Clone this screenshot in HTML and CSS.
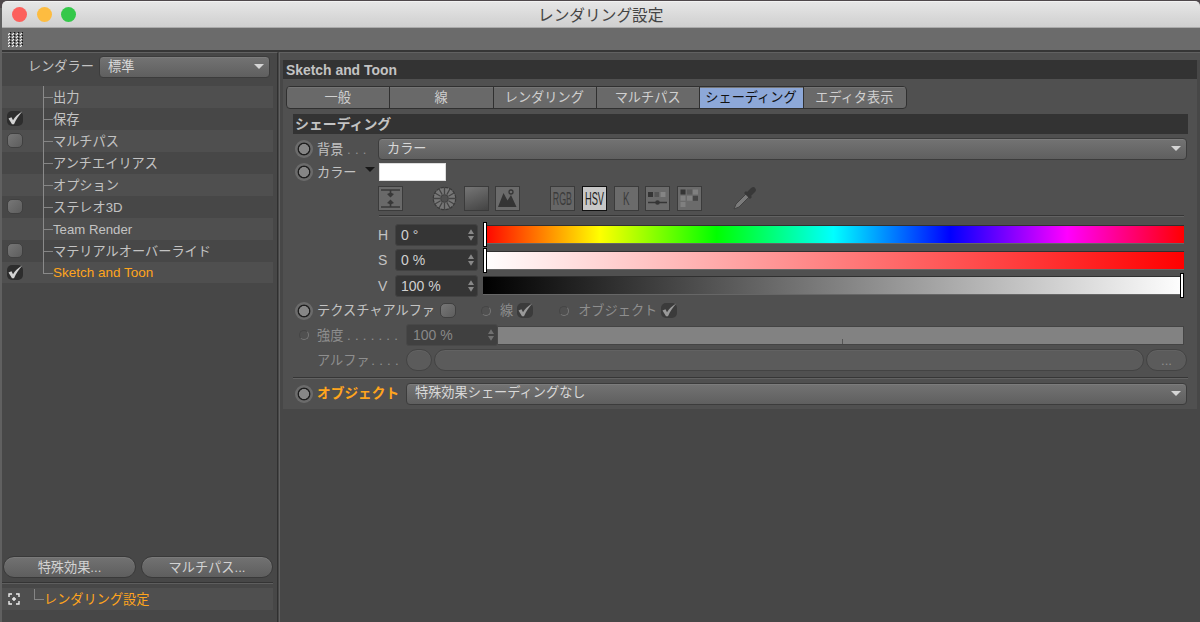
FILE: index.html
```
<!DOCTYPE html>
<html lang="ja">
<head>
<meta charset="utf-8">
<title>レンダリング設定</title>
<link rel="stylesheet" href="styles.css">
</head>
<body>
<svg class="defs" width="0" height="0">
  <symbol id="check" viewBox="0 0 16 15"><path d="M1.500 7.500 4.500 6.300 6 9.200C8 6 11 2.800 15.200.5 12 4.300 9 8.500 7 13.200H5Z" fill="currentColor"/></symbol>
  <symbol id="steps" viewBox="0 0 8 14"><path d="M4 1.300 7 6H1ZM4 12.700 7 8H1Z" fill="currentColor"/></symbol>
</svg>
<div class="window">
  <header class="titlebar">
    <div class="lights"><i class="red"></i><i class="yellow"></i><i class="green"></i></div>
    <h1>レンダリング設定</h1>
  </header>
  <div class="toolbar">
    <svg width="15" height="15" viewBox="0 0 15 15"><path d="M0 3 2 1M4 3 6 1M8 3 10 1M12 3 14 1M0 6 2 4M4 6 6 4M8 6 10 4M12 6 14 4M0 9 2 7M4 9 6 7M8 9 10 7M12 9 14 7M0 12 2 10M4 12 6 10M8 12 10 10M12 12 14 10M0 15 2 13M4 15 6 13M8 15 10 13M12 15 14 13" stroke="#111" stroke-width="1.500" transform="translate(1 -1)"/><path d="M0 3 2 1M4 3 6 1M8 3 10 1M12 3 14 1M0 6 2 4M4 6 6 4M8 6 10 4M12 6 14 4M0 9 2 7M4 9 6 7M8 9 10 7M12 9 14 7M0 12 2 10M4 12 6 10M8 12 10 10M12 12 14 10M0 15 2 13M4 15 6 13M8 15 10 13M12 15 14 13" stroke="#eee" stroke-width="1.300"/></svg>
  </div>
  <div class="content">
    <aside class="sidebar">
      <div class="renderer"><span>レンダラー</span><div class="select"><span>標準</span><i class="arrow"></i></div></div>
      <ul class="tree">
        <li><span class="slot"></span><i class="branch"></i><span>出力</span></li>
        <li><span class="slot"><span class="box on"><svg><use href="#check"/></svg></span></span><i class="branch"></i><span>保存</span></li>
        <li><span class="slot"><span class="box"></span></span><i class="branch"></i><span>マルチパス</span></li>
        <li><span class="slot"></span><i class="branch"></i><span>アンチエイリアス</span></li>
        <li><span class="slot"></span><i class="branch"></i><span>オプション</span></li>
        <li><span class="slot"><span class="box"></span></span><i class="branch"></i><span>ステレオ3D</span></li>
        <li><span class="slot"></span><i class="branch"></i><span>Team Render</span></li>
        <li><span class="slot"><span class="box"></span></span><i class="branch"></i><span>マテリアルオーバーライド</span></li>
        <li class="active"><span class="slot"><span class="box on"><svg><use href="#check"/></svg></span></span><i class="branch last"></i><span>Sketch and Toon</span></li>
      </ul>
      <div class="buttons"><button>特殊効果...</button><button>マルチパス...</button></div>
      <div class="preset">
        <svg class="target" width="12" height="12" viewBox="0 0 12 12" fill="none" stroke="#eee" stroke-width="1.4"><path d="M1 4V1H4M8 1H11V4M11 8V11H8M4 11H1V8M6 4V8M4 6H8"/></svg>
        <i class="elbow"></i><span>レンダリング設定</span>
      </div>
    </aside>
    <main class="panel">
      <h2>Sketch and Toon</h2>
      <div class="group">
        <nav class="tabs"><span>一般</span><span>線</span><span>レンダリング</span><span>マルチパス</span><span class="current">シェーディング</span><span>エディタ表示</span></nav>
        <h3>シェーディング</h3>
        <div class="row background"><i class="ring"></i><label>背景 <b class="dots">...</b></label><div class="select"><span>カラー</span><i class="arrow"></i></div></div>
        <div class="row color"><i class="ring"></i><label>カラー</label><i class="disclosure"></i><div class="swatch"></div></div>
        <div class="picker">
          <svg class="compact" width="25" height="25" viewBox="0 0 25 25"><rect x=".5" y=".5" width="24" height="24" fill="#696969" stroke="#3b3b3b"/><path d="M3 4H22M3 21H22" stroke="#383838" stroke-width="1.500"/><path d="M12.500 4V10M12.500 15V21" stroke="#383838" stroke-width="1.600"/><path d="M9 8 12.500 6.500 16 8 12.500 11.500ZM9 17 12.500 13.500 16 17 12.500 18.500Z" fill="#383838"/></svg>
          <svg class="wheel" width="25" height="25" viewBox="0 0 25 25"><circle cx="12.5" cy="12.5" r="7.5" fill="none" stroke="#777" stroke-width="7"/><circle cx="12.5" cy="12.5" r="11.2" fill="none" stroke="#393939" stroke-width="1.2" stroke-dasharray="3.4 1"/><path d="M12.5 1V8M12.5 17V24M1 12.5H8M17 12.5H24M6.8 2.5 10.2 8.6M14.8 16.4 18.2 22.5M2.5 6.8 8.6 10.2M16.4 14.8 22.5 18.2M18.2 2.5 14.8 8.6M10.2 16.4 6.8 22.5M22.5 6.8 16.4 10.2M8.6 14.8 2.5 18.2" stroke="#444" stroke-width="1.3"/><circle cx="12.5" cy="12.5" r="3.8" fill="#505050" stroke="#424242"/></svg>
          <svg class="spectrum" width="25" height="25" viewBox="0 0 25 25"><defs><linearGradient id="shade" x1=".8" y1="1" x2=".4" y2="0"><stop stop-color="#454545"/><stop offset="1" stop-color="#717171"/></linearGradient></defs><rect x=".5" y=".5" width="24" height="24" fill="url(#shade)" stroke="#3b3b3b"/></svg>
          <svg class="image" width="25" height="25" viewBox="0 0 25 25"><rect x=".5" y=".5" width="24" height="24" fill="#6b6b6b" stroke="#3b3b3b"/><path d="M3 21 8.500 7 12.500 14.500 16 9 21.500 21Z" fill="#353535"/><circle cx="16" cy="6" r="2" fill="none" stroke="#353535" stroke-width="1.300"/></svg>
          <svg class="rgb" width="25" height="25" viewBox="0 0 25 25"><rect x=".5" y=".5" width="24" height="24" fill="#666" stroke="#3b3b3b"/><text transform="translate(2.800 18.800) scale(.48 1)" fill="#3b3b3b">RGB</text></svg>
          <svg class="hsv" width="25" height="25" viewBox="0 0 25 25"><rect x=".5" y=".5" width="24" height="24" fill="#c7c7c7" stroke="#111"/><text transform="translate(3 18.800) scale(.5 1)" fill="#1a1a1a">HSV</text></svg>
          <svg class="kelvin" width="25" height="25" viewBox="0 0 25 25"><rect x=".5" y=".5" width="24" height="24" fill="#6b6b6b" stroke="#3b3b3b"/><text transform="translate(9 18.800) scale(.53 1)" fill="#3b3b3b">K</text></svg>
          <svg class="mixer" width="25" height="25" viewBox="0 0 25 25"><rect x=".5" y=".5" width="24" height="24" fill="#6b6b6b" stroke="#3b3b3b"/><path d="M3 6H8V11H3Z" fill="#353535"/><path d="M9.500 6H14V11H9.500Z" fill="#555"/><path d="M15.500 6H20.500V11H15.500Z" fill="#858585"/><path d="M3 16.500H22" stroke="#353535" stroke-width="1.500"/><circle cx="12.500" cy="16.500" r="2.300" fill="#353535"/></svg>
          <svg class="swatches" width="25" height="25" viewBox="0 0 25 25"><rect x=".5" y=".5" width="24" height="24" fill="#6b6b6b" stroke="#3b3b3b"/><path d="M3.500 3.500H8.500V8.500H3.500Z" fill="#353535"/><path d="M10 3.500H15V8.500H10Z" fill="#5a5a5a"/><path d="M16 3.500H21V8.500H16ZM3.500 9.800H8.500V14.800H3.500ZM10 9.800H15V14.800H10ZM3.500 16H8.500V21H3.500Z" fill="#808080"/><path d="M16 9.800H21V14.800H16Z" fill="#454545"/></svg>
          <svg class="pipette" width="25" height="25" viewBox="0 0 25 25"><path d="M2 23 4 18 14 8 17 11 7 21Z" fill="#7b7b7b" stroke="#424242"/><path d="M12 7 14 5 15 6 19 2Q22 0 23 2 25 4 23 6L19 10 20 11 18 13Z" fill="#383838"/></svg>
        </div>
        <div class="rule short"></div>
        <div class="row channel"><label>H</label><div class="field"><span>0 °</span><svg><use href="#steps"/></svg></div><div class="slider hue"><i></i></div></div>
        <div class="row channel"><label>S</label><div class="field"><span>0 %</span><svg><use href="#steps"/></svg></div><div class="slider sat"><i></i></div></div>
        <div class="row channel"><label>V</label><div class="field"><span>100 %</span><svg><use href="#steps"/></svg></div><div class="slider val"><i></i></div></div>
        <div class="row alpha-toggle"><i class="ring"></i><label>テクスチャアルファ</label><span class="box"></span><i class="mini"></i><span class="dim">線</span><span class="box on faded"><svg><use href="#check"/></svg></span><i class="mini second"></i><span class="dim">オブジェクト</span><span class="box on faded"><svg><use href="#check"/></svg></span></div>
        <div class="row strength"><i class="mini"></i><label>強度 <b class="dots">.......</b></label><div class="field"><span>100 %</span><svg><use href="#steps"/></svg></div><div class="track"><i></i></div></div>
        <div class="row alpha"><label>アルファ <b class="dots">....</b></label><span class="pill round"></span><span class="pill wide"></span><span class="pill more">...</span></div>
        <div class="rule"></div>
        <div class="row object"><i class="ring"></i><label>オブジェクト</label><div class="select"><span>特殊効果シェーディングなし</span><i class="arrow"></i></div></div>
      </div>
    </main>
  </div>
</div>
</body>
</html>
```
FILE: styles.css
```
* { box-sizing: border-box; }
body { margin: 0; width: 1200px; height: 622px; overflow: hidden; background: #626262; font: 13.2px/18px "Liberation Sans", "Noto Sans CJK JP", sans-serif; color: #c3c3c3; white-space: nowrap; }
h1, h2, h3, ul { margin: 0; padding: 0; }
i { display: block; flex: none; }
svg { display: block; flex: none; }
.defs { position: absolute; }
.window { height: 622px; padding: 1px 0 0 2px; display: flex; flex-direction: column; background: linear-gradient(#4f484b 0 8px, #606060 8px); }
.titlebar { height: 27px; flex: none; display: flex; align-items: center; border-radius: 5px 5px 0 0; border-top: 1px solid #f2f2f2; border-bottom: 1px solid #aaa; background: linear-gradient(#e6e6e6, #cfcfcf); }
.lights { width: 536px; padding-left: 10px; display: flex; gap: 9.500px; }
.lights i { width: 15px; height: 15px; border-radius: 50%; }
.red { background: #fc605c; }
.yellow { background: #fdbc40; }
.green { background: #34c84a; }
h1 { padding-top: 2px; font-size: 15.700px; line-height: 22px; font-weight: 400; color: #444; }
.toolbar { height: 22px; flex: none; padding: 4px 0 0 6px; background: #6b6b6b; }
.content { flex: 1; min-height: 0; display: flex; border-top: 2px solid #363636; background: #474747; }
.sidebar { width: 276px; flex: none; display: flex; flex-direction: column; border-top: 1px solid #616161; border-right: 1px solid #303030; }
.renderer { height: 33px; padding: 3px 0 0 26px; display: flex; align-items: flex-start; }
.renderer > span { width: 71px; padding-top: 2px; }
.renderer .select { width: 171px; flex: none; }
.select { height: 22px; flex: 1; display: flex; align-items: center; justify-content: space-between; padding: 0 5px 1px 8px; border: 1px solid #3c3c3c; border-radius: 4px; background: linear-gradient(#737373, #5f5f5f); box-shadow: inset 0 1px #7c7c7c; color: #d8d8d8; }
.arrow { border: 5px solid transparent; border-top-color: #d5d5d5; border-bottom: 0; }
.tree { list-style: none; width: 271px; }
.tree li { height: 21.950px; display: flex; align-items: center; }
.tree li > span:last-child { padding-top: 2px; }
.tree li:nth-child(odd) { background: #4f4f4f; }
.tree .active { color: #ffa51d; font-size: 13.500px; }
.slot { width: 41px; padding-left: 5px; }
.branch { align-self: stretch; width: 10px; border-left: 1px solid #8a8a8a; display: flex; align-items: center; }
.branch::after { content: ""; width: 9px; height: 1px; margin-top: 1px; background: #858585; }
.branch.last { align-self: flex-start; height: 12px; border-bottom: 1px solid #8a8a8a; }
.branch.last::after { display: none; }
.box { display: block; flex: none; width: 16px; height: 15px; border: 1px solid #404040; border-radius: 5px; background: linear-gradient(135deg, #777, #5d5d5d); }
.box.on { border: 0; background: #2d2d2d; color: #d2d2d2; }
.box svg { width: 16px; height: 15px; }
.box.faded { background: #3b3b3b; color: #999; }
.buttons { margin-top: auto; display: flex; gap: 5px; padding-left: 1px; }
button { width: 132px; height: 22px; padding: 1px 0 0; border: 1px solid #393939; border-radius: 11px; background: linear-gradient(#727272, #5e5e5e); box-shadow: inset 0 1px #7a7a7a; color: #d2d2d2; font: inherit; }
button:first-child { width: 133px; }
.preset { height: 40px; margin: 4px 4px 0 0; padding: 6px 5px 0 6px; display: flex; align-items: flex-start; color: #ffa51d; border-top: 1px solid #343434; box-shadow: inset 0 1px #5e5e5e; background: linear-gradient(#474747 5px, #4f4f4f 5px 27px, #474747 27px); }
.target { margin-top: 4px; }
.elbow { width: 10px; height: 11px; margin: 0 0 0 14px; border: solid #858585; border-width: 0 0 1px 1px; }
.preset span { padding-top: 2px; }
.panel { flex: 1; min-width: 0; margin-left: 1px; padding: 7px 3px 0 3px; border-top: 1px solid #616161; border-left: 1px solid #616161; background: linear-gradient(#505050 7px, #474747 7px); }
h2 { height: 19px; padding-left: 3px; background: #333; font-size: 13.900px; line-height: 20px; }
.group { height: 330px; padding: 7px 9px 0 10px; background: #505050; }
.tabs { width: 621px; height: 23px; margin-left: -7px; display: flex; border: 1px solid #303030; border-radius: 4px; background: #696969; overflow: hidden; color: #d0d0d0; }
.tabs span { flex: 1 1 0; padding-right: 1px; border-left: 1px solid #303030; text-align: center; line-height: 21px; box-shadow: inset 0 1px #747474; }
.tabs span:first-child { border-left: 0; }
.tabs .current { background: #8da8d8; color: #111; }
h3 { height: 20px; margin-top: 5px; padding-left: 2px; background: #333; font-size: 13.900px; line-height: 20px; }
.row { display: flex; align-items: center; }
.row label { padding-top: 1px; }
.ring { width: 18px; height: 18px; margin: 0 5px 0 2px; border-radius: 50%; background: radial-gradient(circle, #868686 0 4.700px, #1f1f1f 5.300px 6px, #6b6b6b 6.800px); }
.ring + label { margin-left: -1px; }
.dots { font-weight: 400; letter-spacing: 4.200px; color: #909090; }
.background { height: 22px; margin-top: 4px; }
.background label { width: 61px; }
.background .select, .object .select { margin-right: 1px; }
.color { height: 22px; margin-top: 1px; }
.color label { width: 48px; }
.disclosure { margin: -5px 4px 0 0; border: 5px solid transparent; border-top-color: #171717; border-bottom: 0; }
.swatch { width: 67px; height: 18px; margin-top: -1px; background: #fff; border: 1px solid #ddd; }
.picker { display: flex; height: 25px; margin: 3px 0 0 85px; }
.picker text { font: 18.500px "Liberation Sans", sans-serif; }
.wheel { margin-left: 29px; }
.spectrum, .image, .hsv, .kelvin, .mixer, .swatches { margin-left: 6.700px; }
.rgb { margin-left: 30px; }
.pipette { margin-left: 29.500px; }
.rule { height: 2px; margin-top: 4px; background: linear-gradient(#363636 50%, #626262 50%); }
.rule.short { margin: 4px 4px 5px 86px; }
.channel { height: 25.500px; padding: 0 4px 0 85px; }
.channel label { width: 17px; padding-top: 0; font-size: 14px; }
.field { width: 83px; height: 22px; flex: none; display: flex; align-items: center; justify-content: space-between; padding: 0 2px 0 5px; background: #353535; border: 1px solid #424242; border-radius: 3px; font-size: 14px; color: #d0d0d0; }
.field svg { width: 8px; height: 14px; color: #888; }
.slider { flex: 1; height: 19px; margin-left: 5px; border-top: 1px solid #303030; border-bottom: 1px solid #666; display: flex; align-items: center; }
.slider i { width: 4px; height: 25px; background: #fff; border: 1px solid #000; }
.hue { background: linear-gradient(90deg, #f00, #ff0 16.660%, #0f0 33.330%, #0ff 50%, #00f 66.660%, #f0f 83.330%, #f00); }
.sat { background: linear-gradient(90deg, #fff, #f00); }
.val { background: linear-gradient(90deg, #000, #fff); justify-content: flex-end; }
.alpha-toggle { height: 24px; }
.alpha-toggle label { width: 123px; }
.mini { width: 10px; height: 10px; border: 1px solid; border-color: #464646 #777 #777 #464646; border-radius: 50%; }
.alpha-toggle .mini { margin: 0 9px 0 25px; }
.alpha-toggle .mini.second { margin-left: 26px; }
.dim { margin-right: 4px; color: #8e8e8e; }
.strength { height: 25px; padding-right: 4px; color: #8e8e8e; }
.strength .mini { margin: 0 8px 0 6px; }
.strength label { width: 89px; }
.strength .field { width: 92px; padding-left: 6px; background: #404040; border-color: #484848; color: #888; }
.strength .field svg { color: #707070; }
.track { flex: 1; height: 19px; border: 1px solid #444; border-left: 0; background: #828282; display: flex; align-items: flex-end; justify-content: center; }
.track i { width: 1px; height: 5px; margin-left: 3px; background: #555; }
.alpha { height: 25px; padding: 0 1px 0 24px; color: #8e8e8e; }
.alpha label { width: 89px; }
.alpha .dots { margin-left: -2px; }
.pill { height: 22px; border: 1px solid #434343; border-radius: 11px; background: #5b5b5b; box-shadow: inset 0 1px #626262; text-align: center; line-height: 21px; }
.pill.round { width: 26px; }
.pill.wide { flex: 1; margin: 0 2px; }
.pill.more { width: 41px; }
.object { height: 22px; margin-top: 4px; }
.object label { width: 89px; font-weight: 700; color: #ffa51d; font-size: 13.700px; }
```
